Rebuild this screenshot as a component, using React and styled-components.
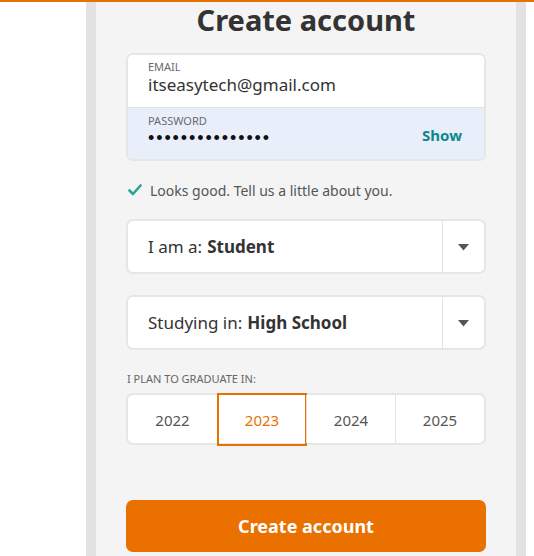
import React from 'react';
import styled, { createGlobalStyle } from 'styled-components';

const GlobalStyle = createGlobalStyle`
  html, body {
    margin: 0;
    padding: 0;
    background: #ffffff;
    font-family: 'Noto Sans', Lato, 'Liberation Sans', sans-serif;
    color: #333333;
  }
`;

const TopBar = styled.div`
  height: 2px;
  background: #e87000;
`;

const Page = styled.div`
  display: flex;
  padding-left: 86px;
  height: 554px;
  overflow: hidden;
`;

const Panel = styled.div`
  width: 440px;
  flex-shrink: 0;
  border-left: 10px solid #e2e2e2;
  border-right: 10px solid #e2e2e2;
  background: #f4f4f4;
  padding: 0 30px;
  box-sizing: border-box;
  display: flex;
  flex-direction: column;
`;

const Title = styled.h1`
  margin: 0 0 15px;
  height: 36px;
  line-height: 36px;
  font-size: 29px;
  font-weight: 700;
  text-align: center;
  color: #333333;
`;

const Card = styled.div`
  border: 2px solid #e6e6e6;
  border-radius: 7px;
  overflow: hidden;
  background: #ffffff;
`;

const Field = styled.div`
  display: flex;
  align-items: flex-start;
  box-sizing: border-box;
  height: ${(p) => p.height}px;
  padding: ${(p) => p.padTop}px 22px 0 20px;
  background: ${(p) => (p.active ? '#e8effb' : '#ffffff')};
  border-top: ${(p) => (p.divider ? '1px solid #e2e2e2' : 'none')};
`;

const FieldBody = styled.div`
  flex: 1;
  display: flex;
  flex-direction: column;
`;

const Label = styled.div`
  font-size: 11px;
  line-height: 15px;
  color: #6a6a6a;
  text-transform: uppercase;
`;

const Value = styled.div`
  font-size: 17px;
  line-height: 22px;
  color: #333333;
`;

const Dots = styled.div`
  font-size: 18px;
  line-height: 20px;
  letter-spacing: 1.9px;
  color: #111111;
  font-family: 'Liberation Sans', sans-serif;
`;

const ShowLink = styled.span`
  align-self: center;
  margin-top: -3px;
  font-size: 15px;
  font-weight: 700;
  color: #0e878c;
`;

const Notice = styled.div`
  display: flex;
  align-items: center;
  gap: 8px;
  margin: 19px 0 0 2px;
  height: 20px;
  font-size: 14px;
  color: #555555;
`;

const Select = styled.div`
  display: flex;
  height: 51px;
  margin-top: ${(p) => p.mt}px;
  border: 2px solid #e6e6e6;
  border-radius: 7px;
  background: #ffffff;
`;

const SelectText = styled.div`
  flex: 1;
  display: flex;
  align-items: center;
  padding-left: 20px;
  font-size: 17px;
  color: #333333;

  b {
    font-weight: 700;
    margin-left: 5px;
  }
`;

const Caret = styled.div`
  width: 41px;
  border-left: 1px solid #e2e2e2;
  display: flex;
  align-items: center;
  justify-content: center;
  padding-top: 2px;
`;

const SmallLabel = styled(Label)`
  margin: 21px 0 7px 1px;
  color: #666666;
`;

const Years = styled.div`
  display: grid;
  grid-template-columns: repeat(4, 1fr);
  height: 48px;
  border: 2px solid #e6e6e6;
  border-radius: 7px;
  background: #ffffff;
`;

const Year = styled.div`
  position: relative;
  display: flex;
  align-items: center;
  justify-content: center;
  padding-top: 2px;
  font-size: 15px;
  color: ${(p) => (p.selected ? '#e87000' : '#555555')};
  border-left: ${(p) => (p.first ? 'none' : '1px solid #e2e2e2')};

  &::after {
    content: '';
    display: ${(p) => (p.selected ? 'block' : 'none')};
    position: absolute;
    left: -1px;
    right: -1px;
    top: -2px;
    bottom: -3px;
    border: 2px solid #e87000;
  }
`;

const SubmitButton = styled.button`
  margin-top: 55px;
  height: 52px;
  border: none;
  border-radius: 7px;
  background: #ea7000;
  color: #ffffff;
  font-family: inherit;
  font-size: 18px;
  font-weight: 700;
  cursor: pointer;
`;

const CaretIcon = () => (
  <svg width="11" height="7" viewBox="0 0 11 7">
    <path d="M0 0 H11 L5.5 6.5 Z" fill="#555555" />
  </svg>
);

const CheckIcon = () => (
  <svg width="14" height="12" viewBox="0 0 14 12">
    <path d="M1.5 6.5 L5 10 L12.5 1.5" stroke="#26a69a" strokeWidth="2.6" fill="none" strokeLinecap="round" strokeLinejoin="round" />
  </svg>
);

const years = ['2022', '2023', '2024', '2025'];

export default function App() {
  return (
    <>
      <GlobalStyle />
      <TopBar />
      <Page>
        <Panel>
          <Title>Create account</Title>
          <Card>
            <Field height={52} padTop={4}>
              <FieldBody>
                <Label>Email</Label>
                <Value>itseasytech@gmail.com</Value>
              </FieldBody>
            </Field>
            <Field height={52} padTop={5} active divider>
              <FieldBody>
                <Label>Password</Label>
                <Dots>•••••••••••••••</Dots>
              </FieldBody>
              <ShowLink>Show</ShowLink>
            </Field>
          </Card>
          <Notice>
            <CheckIcon />
            Looks good. Tell us a little about you.
          </Notice>
          <Select mt={19}>
            <SelectText>
              I am a: <b>Student</b>
            </SelectText>
            <Caret>
              <CaretIcon />
            </Caret>
          </Select>
          <Select mt={21}>
            <SelectText>
              Studying in: <b>High School</b>
            </SelectText>
            <Caret>
              <CaretIcon />
            </Caret>
          </Select>
          <SmallLabel>I plan to graduate in:</SmallLabel>
          <Years>
            {years.map((y, i) => (
              <Year key={y} first={i === 0} selected={y === '2023'}>
                {y}
              </Year>
            ))}
          </Years>
          <SubmitButton>Create account</SubmitButton>
        </Panel>
      </Page>
    </>
  );
}
